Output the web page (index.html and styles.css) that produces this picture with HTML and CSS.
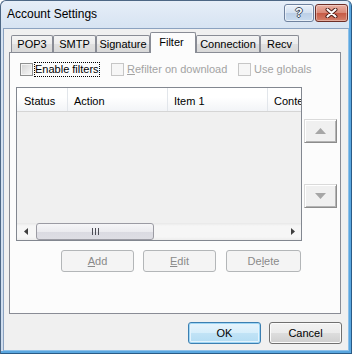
FILE: index.html
```html
<!DOCTYPE html>
<html>
<head>
<meta charset="utf-8">
<link rel="stylesheet" href="styles.css">
</head>
<body>
<div class="window">
  <div class="titlebar">
    <span class="title">Account Settings</span>
    <div class="caption-btns">
      <div class="cbtn help"><span class="qmark">?</span></div>
      <div class="cbtn close">
        <svg width="13" height="10" viewBox="0 0 13 10">
          <path d="M2.5 1.5 L10.5 8.5 M10.5 1.5 L2.5 8.5" stroke="#4a1a14" stroke-width="4" stroke-linecap="round"/>
          <path d="M2.5 1.5 L10.5 8.5 M10.5 1.5 L2.5 8.5" stroke="#ffffff" stroke-width="2.2" stroke-linecap="round"/>
        </svg>
      </div>
    </div>
  </div>
  <div class="client">
    <div class="tabs">
      <div class="tab t-pop3">POP3</div>
      <div class="tab t-smtp">SMTP</div>
      <div class="tab t-sig">Signature</div>
      <div class="tab t-filter">Filter</div>
      <div class="tab t-conn">Connection</div>
      <div class="tab t-recv">Recv</div>
    </div>
    <div class="panel">
      <div class="checkrow">
        <div class="chk g1"><span class="box"></span><span class="lbl focus">Enable filters</span></div>
        <div class="chk g2 disabled"><span class="box"></span><span class="lbl"><u>R</u>efilter on download</span></div>
        <div class="chk g3 disabled"><span class="box"></span><span class="lbl">Use globals</span></div>
      </div>
      <div class="listrow">
        <div class="listview">
          <div class="lv-head">
            <div class="col c-status">Status</div>
            <div class="col c-action">Action</div>
            <div class="col c-item">Item 1</div>
            <div class="col c-content">Content</div>
          </div>
          <div class="lv-body"></div>
          <div class="hscroll">
            <div class="sb-arrow">
              <svg width="4" height="7" viewBox="0 0 4 7"><path d="M4 0 L0 3.5 L4 7 Z" fill="#3f3f3f"/></svg>
            </div>
            <div class="sb-track">
              <div class="sb-thumb">
                <svg width="8" height="7" viewBox="0 0 8 7">
                  <path d="M1.5 0 V7 M4.5 0 V7 M7.5 0 V7" stroke="#4d4d55" stroke-width="1"/>
                </svg>
              </div>
            </div>
            <div class="sb-arrow">
              <svg width="4" height="7" viewBox="0 0 4 7"><path d="M0 0 L4 3.5 L0 7 Z" fill="#3f3f3f"/></svg>
            </div>
          </div>
        </div>
        <div class="movebtns">
          <div class="mbtn">
            <svg width="11" height="6" viewBox="0 0 11 6"><path d="M0 6 L5.5 0 L11 6 Z" fill="#a6a6a6"/></svg>
          </div>
          <div class="mbtn down">
            <svg width="11" height="6" viewBox="0 0 11 6"><path d="M0 0 L5.5 6 L11 0 Z" fill="#a6a6a6"/></svg>
          </div>
        </div>
      </div>
      <div class="actions">
        <div class="btn disabled w73"><span><u>A</u>dd</span></div>
        <div class="btn disabled w73"><span><u>E</u>dit</span></div>
        <div class="btn disabled w75 gap10"><span>De<u>l</u>ete</span></div>
      </div>
    </div>
    <div class="footer">
      <div class="btn default w73">OK</div>
      <div class="btn w73">Cancel</div>
    </div>
  </div>
</div>
</body>
</html>
```

FILE: styles.css
```css
html, body {
  margin: 0;
  padding: 0;
  background: #ffffff;
}
body {
  font-family: "Liberation Sans", Arial, sans-serif;
  font-size: 11px;
  color: #000;
}
.window {
  width: 352px;
  height: 354px;
  box-sizing: border-box;
  display: flex;
  flex-direction: column;
  border: 1px solid #4d6785;
  border-right-color: #2a5b86;
  border-bottom-color: #2a5b86;
  border-radius: 6px 6px 0 0;
  padding: 0 2px 2px 2px;
  background: linear-gradient(#e6eef8, #d6e3f2 28px, #cfddee);
  box-shadow: inset -2px -2px 0 #5aa7e0;
}
.titlebar {
  flex: none;
  height: 27px;
  display: flex;
  align-items: flex-start;
  padding-left: 4px;
}
.title {
  font-size: 12px;
  line-height: 14px;
  margin-top: 6px;
}
.caption-btns {
  margin-left: auto;
  margin-top: 3px;
  margin-right: 1px;
  display: flex;
  gap: 1px;
}
.cbtn {
  height: 18px;
  box-sizing: border-box;
  border-radius: 3px;
  display: flex;
  align-items: center;
  justify-content: center;
}
.help {
  width: 30px;
  border: 1px solid #6e819e;
  background: linear-gradient(#eaf1fa, #d3e0f0 50%, #bccfe6 51%, #c9dbef);
  box-shadow: inset 0 0 0 1px rgba(255,255,255,0.55);
}
.qmark {
  font-family: "Liberation Sans", Arial, sans-serif;
  font-weight: bold;
  font-size: 12px;
  line-height: 12px;
  color: #fff;
  text-shadow: 1px 0 0 #3d4a5c, -1px 0 0 #3d4a5c, 0 1px 0 #3d4a5c, 0 -1px 0 #3d4a5c;
}
.close {
  width: 33px;
  border: 1px solid #6d2e27;
  background: linear-gradient(#eab0a3, #d98876 50%, #c65a45 51%, #d5806a);
  box-shadow: inset 0 0 0 1px rgba(255,255,255,0.35);
}
.client {
  flex: 1;
  background: #f0f0f0;
  border: 1px solid #8ba2c0;
  border-right-color: #8ec1ea;
  border-bottom-color: #8ec1ea;
  padding: 3px 0 0 5px;
  display: flex;
  flex-direction: column;
}
.tabs {
  flex: none;
  height: 20px;
  display: flex;
  align-items: flex-end;
  padding-left: 2px;
  position: relative;
  z-index: 1;
}
.tab {
  box-sizing: border-box;
  height: 17px;
  border: 1px solid #898c95;
  border-bottom: none;
  border-radius: 2px 2px 0 0;
  background: linear-gradient(#f4f4f4, #ececec 50%, #e0e0e0 51%, #d9d9d9);
  display: flex;
  align-items: center;
  justify-content: center;
  white-space: nowrap;
}
.t-pop3 { width: 42px; }
.t-smtp { width: 43px; }
.t-sig { width: 54px; }
.t-filter {
  width: 46px;
  height: 21px;
  margin-bottom: -1px;
  padding-bottom: 2px;
  padding-right: 3px;
  background: #fcfcfc;
}
.t-conn { width: 64px; }
.t-recv { width: 39px; }
.panel {
  flex: none;
  box-sizing: border-box;
  width: 332px;
  height: 262px;
  border: 1px solid #898c95;
  background: #fcfcfc;
  padding-top: 9px;
  display: flex;
  flex-direction: column;
}
.checkrow {
  height: 15px;
  padding-left: 10px;
  display: flex;
  align-items: center;
}
.chk {
  height: 15px;
  display: flex;
  align-items: center;
}
.g1 { width: 91px; }
.g2 { width: 127px; }
.box {
  flex: none;
  width: 13px;
  height: 13px;
  box-sizing: border-box;
  border: 1px solid #8e8f8f;
  background: linear-gradient(135deg, #d2d2d2, #f9f9f9);
  box-shadow: inset 0 0 0 1px #f4f4f4;
  margin-right: 1px;
}
.lbl {
  border: 1px dotted transparent;
  line-height: 13px;
  white-space: nowrap;
}
.focus { border-color: #000; }
.disabled .box {
  border-color: #c6c6c6;
  background: #f6f6f6;
  box-shadow: none;
}
.disabled .lbl {
  color: #a3a3a3;
  margin-left: 1px;
}
.listrow {
  margin-top: 10px;
  padding-left: 6px;
  display: flex;
}
.listview {
  flex: none;
  width: 286px;
  height: 154px;
  box-sizing: border-box;
  border: 1px solid #828790;
  background: #f0f0f0;
  display: flex;
  flex-direction: column;
  overflow: hidden;
}
.lv-head {
  flex: none;
  height: 24px;
  box-sizing: border-box;
  border-bottom: 1px solid #d5d5d5;
  background: linear-gradient(#ffffff, #ffffff 40%, #f2f4f7);
  display: flex;
}
.col {
  flex: none;
  box-sizing: border-box;
  border-right: 1px solid #e2e6eb;
  padding: 3px 0 0 6px;
  display: flex;
  align-items: center;
  white-space: nowrap;
  overflow: hidden;
}
.c-status { width: 51px; padding-left: 7px; }
.c-action { width: 100px; }
.c-item { width: 100px; }
.c-content { width: 33px; border-right: none; }
.lv-body { flex: 1; }
.hscroll {
  flex: none;
  height: 17px;
  display: flex;
  background: linear-gradient(#e8e8e8, #f6f6f6 3px, #f6f6f6 14px, #ececec);
}
.sb-arrow {
  width: 17px;
  display: flex;
  align-items: center;
  justify-content: center;
}
.sb-track {
  flex: 1;
  display: flex;
}
.sb-thumb {
  margin-left: 2px;
  width: 118px;
  box-sizing: border-box;
  border: 1px solid #9b9ba3;
  border-radius: 3px;
  background: linear-gradient(#f6f6f8, #ebebef 50%, #dadae1 51%, #dedee4);
  display: flex;
  align-items: center;
  justify-content: center;
}
.movebtns {
  margin-left: 2px;
  padding-top: 32px;
  display: flex;
  flex-direction: column;
}
.mbtn {
  width: 33px;
  height: 24px;
  box-sizing: border-box;
  border: 1px solid;
  border-color: #dadada #8c8c8c #8c8c8c #dadada;
  background: #f0f0f0;
  box-shadow: inset 1px 1px 0 #ffffff, inset -1px -1px 0 #b4b4b4;
  display: flex;
  align-items: center;
  justify-content: center;
}
.down { margin-top: 41px; }
.actions {
  margin-top: 9px;
  padding-left: 51px;
  display: flex;
  gap: 9px;
}
.gap10 { margin-left: 1px; }
.btn {
  height: 22px;
  box-sizing: border-box;
  border: 1px solid #707070;
  border-radius: 3px;
  background: linear-gradient(#f2f2f2, #ebebeb 50%, #dddddd 51%, #cfcfcf);
  box-shadow: inset 0 0 0 1px #fbfbfb;
  display: flex;
  align-items: center;
  justify-content: center;
  color: #000;
}
.w73 { width: 73px; }
.w75 { width: 75px; }
.btn.disabled {
  border-color: #b3b6b8;
  background: #f4f4f4;
  box-shadow: none;
  color: #8a8a8a;
}
.btn.default {
  border-color: #3c7fb1;
  background: linear-gradient(#e8f4fc, #d6eefb 50%, #c1e3f6 51%, #b3dcf3);
  box-shadow: inset 0 0 0 1px #9fd6f5, inset 0 0 0 2px #e4f3fc;
}
.footer {
  margin-top: 8px;
  padding-right: 6px;
  display: flex;
  justify-content: flex-end;
  gap: 8px;
}
```
